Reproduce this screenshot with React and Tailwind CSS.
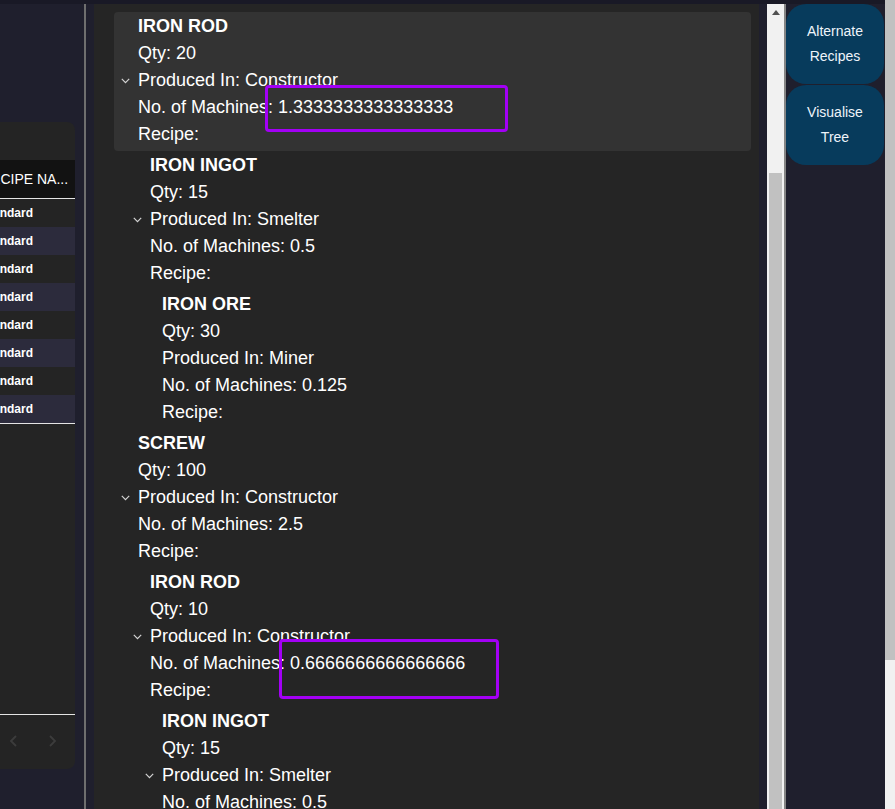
import React from 'react';

const tree = [
    {
        name: 'IRON ROD', qty: 20, machine: 'Constructor', count: '1.3333333333333333', active: true,
        children: [
            {
                name: 'IRON INGOT', qty: 15, machine: 'Smelter', count: '0.5',
                children: [
                    { name: 'IRON ORE', qty: 30, machine: 'Miner', count: '0.125', children: [] },
                ],
            },
        ],
    },
    {
        name: 'SCREW', qty: 100, machine: 'Constructor', count: '2.5',
        children: [
            {
                name: 'IRON ROD', qty: 10, machine: 'Constructor', count: '0.6666666666666666',
                children: [
                    {
                        name: 'IRON INGOT', qty: 15, machine: 'Smelter', count: '0.5',
                        children: [
                            { name: 'IRON ORE', qty: 30, machine: 'Miner', count: '0.125', children: [] },
                        ],
                    },
                ],
            },
        ],
    },
];

const Chevron = () => (
    <span className="inline-flex items-center -ml-[17px] w-[17px] h-[27px]">
        <svg width="9" height="6" viewBox="0 0 9 6" fill="none">
            <polyline points="0.8,0.8 4.5,4.6 8.2,0.8" stroke="#d4d4d4" strokeWidth="1.2" />
        </svg>
    </span>
);

const Node = ({ node }) => (
    <div>
        <div className={`pl-6 pt-[1px] pb-[3px] rounded-[4px] ${node.active ? 'bg-[#333333]' : ''}`}>
            <div className="font-bold">{node.name}</div>
            <div>Qty: {node.qty}</div>
            <div className="flex">
                {node.children.length > 0 && <Chevron />}
                <span>Produced In: {node.machine}</span>
            </div>
            <div>No. of Machines: {node.count}</div>
            <div>Recipe:</div>
        </div>
        {node.children.length > 0 && (
            <div className="pl-3">
                {node.children.map((c, i) => <Node key={i} node={c} />)}
            </div>
        )}
    </div>
);

const rows = Array.from({ length: 8 });

const App = () => {
    return (
        <div className="w-[895px] h-[809px] flex overflow-hidden bg-[#1f1f2d]" style={{ fontFamily: '"Liberation Sans", Arial, sans-serif' }}>
            <div className="w-[885px] flex flex-col">
                <div className="h-[4px] bg-[#191926]" />
                <div className="flex flex-1 min-h-0">
                    {/* left table panel */}
                    <div className="w-[84px] shrink-0">
                        <div className="mt-[118px] w-[75px] h-[647px] bg-[#242424] rounded-r-[8px] overflow-hidden flex flex-col">
                            <div className="h-[38px]" />
                            <div className="-ml-[27px] w-[102px]">
                                <div className="h-[38px] bg-[#121212] flex items-center pl-2 text-[14px] text-white whitespace-nowrap">RECIPE NA...</div>
                                <div className="h-[1px] bg-[#e4e4e4]" />
                                {rows.map((_, i) => (
                                    <div key={i} className={`h-[28px] flex items-center pl-2 text-[12px] font-bold text-white ${i % 2 ? 'bg-[#2c2b3c]' : 'bg-[#242424]'}`}>Standard</div>
                                ))}
                                <div className="h-[1px] bg-[#e4e4e4]" />
                            </div>
                            <div className="h-[290px]" />
                            <div className="h-[1px] bg-[#e4e4e4]" />
                            <div className="flex-1 flex items-center gap-[32px] pl-[9px] pb-[2px]">
                                <svg width="8" height="12" viewBox="0 0 8 12" fill="none"><polyline points="7,1 2,6 7,11" stroke="#3c3c3c" strokeWidth="1.8" /></svg>
                                <svg width="8" height="12" viewBox="0 0 8 12" fill="none"><polyline points="1,1 6,6 1,11" stroke="#3c3c3c" strokeWidth="1.8" /></svg>
                            </div>
                        </div>
                    </div>
                    <div className="w-[2px] bg-[#6e6e6e] shrink-0" />
                    <div className="w-[8px] shrink-0" />

                    {/* main tree panel */}
                    <div className="w-[665px] shrink-0 bg-[#252525] relative overflow-hidden">
                        <div className="pl-5 pr-2 pt-2 text-[18px] leading-[27px] text-white">
                            {tree.map((n, i) => <Node key={i} node={n} />)}
                        </div>
                        <div className="absolute left-[171px] top-[81px] w-[243px] h-[47px] border-[3px] border-[#a300f5] rounded-[4px]" />
                        <div className="absolute left-[185px] top-[635px] w-[220px] h-[60px] border-[3px] border-[#a300f5] rounded-[4px]" />
                    </div>

                    <div className="w-[8px] shrink-0" />
                    {/* inner scrollbar */}
                    <div className="w-[17px] shrink-0 bg-[#f1f1f1] flex flex-col items-center">
                        <div className="h-[17px] flex items-center justify-center">
                            <svg width="8" height="5" viewBox="0 0 8 5"><polygon points="0,5 4,0 8,5" fill="#505050" /></svg>
                        </div>
                        <div className="h-[152px]" />
                        <div className="w-[13px] flex-1 bg-[#c1c1c1]" />
                    </div>
                    <div className="w-[2px] shrink-0 bg-[#858585]" />

                    {/* right buttons */}
                    <div className="w-[99px] shrink-0 flex flex-col gap-[1px]">
                        <div className="w-[98px] h-[80px] rounded-[20px] bg-[#073b5c] flex items-center justify-center text-center text-[14px] leading-[25px] text-[#eef4fa]">
                            Alternate<br />Recipes
                        </div>
                        <div className="w-[98px] h-[80px] rounded-[20px] bg-[#073b5c] flex items-center justify-center text-center text-[14px] leading-[25px] text-[#eef4fa]">
                            Visualise<br />Tree
                        </div>
                    </div>
                </div>
            </div>
            {/* page scrollbar */}
            <div className="w-[10px] bg-[#f1f1f1] flex flex-col">
                <div className="h-[660px] bg-[#c1c1c1]" />
            </div>
        </div>
    );
};

export default App;
